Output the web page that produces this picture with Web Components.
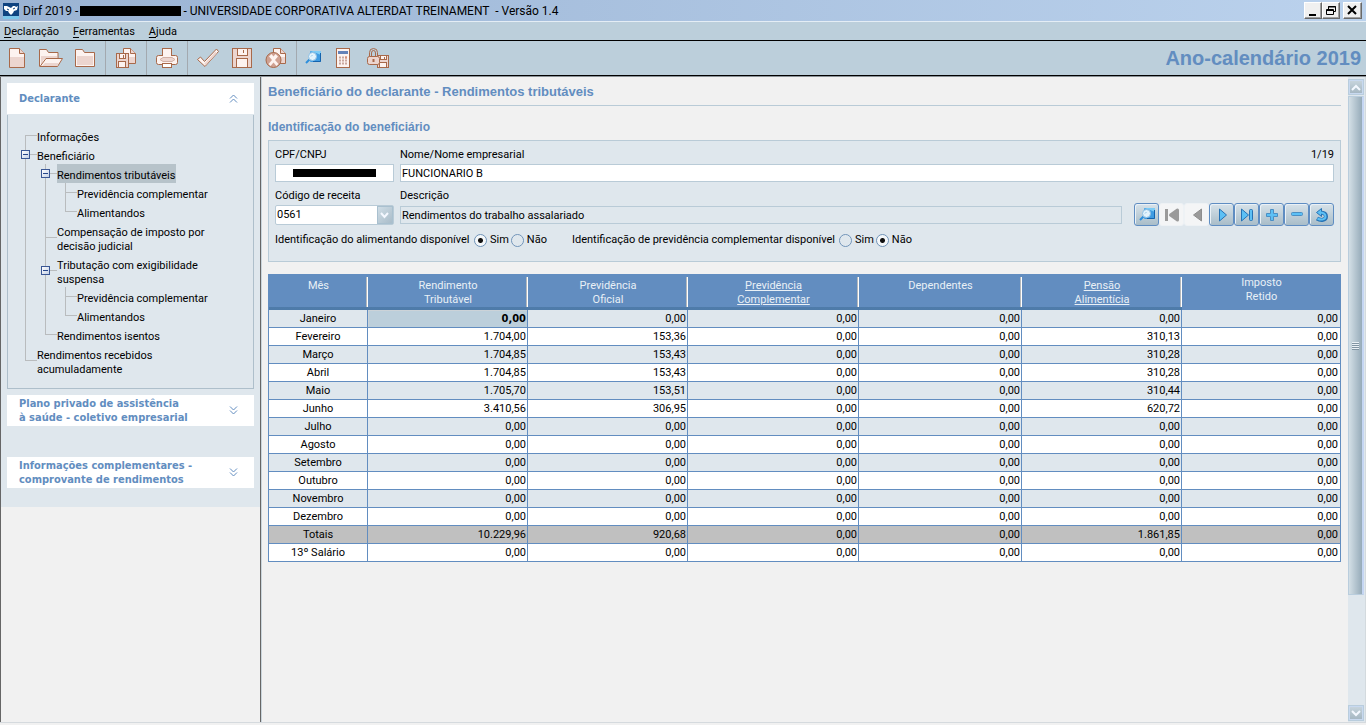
<!DOCTYPE html>
<html lang="pt-BR">
<head>
<meta charset="utf-8">
<title>Dirf 2019</title>
<style>
  html, body { height: 100%; margin: 0; }
  body { font: 11px/14px Roboto, "Noto Sans", sans-serif; color: #000; background: #f1f1f1; }
</style>
</head>
<body>
<dirf-app></dirf-app>

<script>
const define = (name, html, init) => {
  const tpl = document.createElement('template');
  tpl.innerHTML = html;
  customElements.define(name, class extends HTMLElement {
    constructor() {
      super();
      this.attachShadow({ mode: 'open' }).append(tpl.content.cloneNode(true));
    }
    connectedCallback() { if (init && !this.ready) { this.ready = true; init.call(this, this.shadowRoot); } }
  });
};

/* ---------- icons ---------- */
const S = '#a8694a', L = '#fdf3f0', P = '#ecd5cf';
const floppy = (x, y, w, h) => `<rect x="${x}.5" y="${y}.5" width="${w}" height="${h}" fill="${P}" stroke="${S}"/>
  <rect x="${x + Math.round(w * .25)}.5" y="${y}.5" width="${Math.round(w * .5)}" height="${Math.round(h * .35)}" fill="${L}" stroke="${S}"/>
  <path d="M${x + Math.round(w * .6)}.5 ${y + 2}v${Math.round(h * .18)}" stroke="${S}"/>
  <rect x="${x + Math.round(w * .2)}.5" y="${y + Math.round(h * .55)}.5" width="${Math.round(w * .6)}" height="${h - Math.round(h * .55)}" fill="${L}" stroke="${S}"/>`;
const doc = (x, y, w, h) => `<path d="M${x}.5 ${y}.5h${w - 5}l5 5v${h - 5}h-${w}z" fill="${L}" stroke="${S}"/>
  <path d="M${x + 1} ${y + 9}h${w - 1}v${h - 9}h-${w - 1}z" fill="${P}"/><path d="M${x + w - 5}.5 ${y}.5v5h5" fill="${P}" stroke="${S}"/>`;
const lens = `<rect x="9" y="5" width="11" height="11" rx="1" fill="#3f9be2"/><path d="M9 5h11v4l-5-2z" fill="#7ccbf5"/><path d="M19.500 7v8.500H12" stroke="#1463ad" fill="none"/>
  <path d="M8.500 13.500 5 17" stroke="#2d8fdc" stroke-width="2"/><circle cx="11.500" cy="10.500" r="4" fill="#e3f3fc" stroke="#8fc0e4"/><path d="M10 10.500l1.500-1.500" stroke="#8fc4ea"/>`;
const ICONS = {
  novo: doc(4, 2, 15, 19),
  abrir: `<path d="M.5 20.500v-17h7l2 3h9.500v6" fill="${L}" stroke="${S}"/><path d="M2 10h16v3H5l-3 7z" fill="${P}"/><path d="M1 20.500l6-8h16.500l-5 8z" fill="${L}" stroke="${S}"/><path d="M6 17h14l-2 3H3z" fill="${P}"/>`,
  pasta: `<path d="M2.500 20.500v-17h7l2 3h10v14z" fill="${L}" stroke="${S}"/><path d="M4 10h16v9H4z" fill="${P}"/>`,
  copia: doc(9, 2, 12, 15) + floppy(2, 7, 12, 14),
  imprimir: `<rect x="7.500" y="2.500" width="9" height="9" fill="${L}" stroke="${S}"/><rect x="1.500" y="9.500" width="21" height="9" rx="2" fill="${L}" stroke="${S}"/><rect x="8" y="3" width="8" height="8" fill="${L}"/><path d="M5 13.500l3-2h9l3 2-3 2H8z" fill="${P}" stroke="#d3b1a6"/><rect x="7.500" y="17.500" width="9" height="4" fill="#fff" stroke="${S}"/>`,
  verificar: `<path d="M1.500 13.500l3-2.500 4 4.500L20.500 3l2 2.500L9 20.500z" fill="${L}" stroke="${S}"/><path d="M9 18.500l11-12" stroke="${P}" stroke-width="2"/>`,
  gravar: floppy(2, 2, 19, 19),
  cancelar: doc(9, 2, 12, 15) + `<circle cx="9.500" cy="14" r="7.500" fill="#cfa192" stroke="${S}"/><path d="M4.500 18l3.500-4-3-3.500L7.500 8l2 2.500L11.500 8 14 10.500 11 14l3.500 4-2 2-3-3.500-3 3.500z" fill="${L}"/>`,
  procurar: lens,
  calcular: `<rect x="5.500" y="2.500" width="13" height="19" fill="${L}" stroke="${S}"/><rect x="7" y="5" width="10" height="3" fill="#6482b8"/><path d="M8 11.500h8M8 14.500h8M8 17.500h8" stroke="#c9a79e" stroke-width="2" stroke-dasharray="2 1"/><path d="M14 11.500h2" stroke="#d98e77" stroke-width="2"/>`,
  bloquear: floppy(12, 9, 11, 12) + `<path d="M4.500 11V6.500q0-4 4-4t4 4V11" fill="none" stroke="${S}"/><path d="M6.500 11V7q0-2.500 2-2.500t2 2.500v4" fill="none" stroke="${S}"/><rect x="2.500" y="10.500" width="12" height="8" rx="2" fill="${P}" stroke="${S}"/><path d="M8.500 13v3" stroke="${S}" stroke-width="2"/>`,
  n_procurar: lens,
  n_primeiro: `<path d="M6.500 6v12M17.500 7v10l-7-5z" fill="#9a9a9a" stroke="#9a9a9a" stroke-width="3" stroke-linejoin="round"/>`,
  n_anterior: `<path d="M16.500 6v12l-8-6z" fill="#9a9a9a" stroke="#8e8e8e" stroke-linejoin="round"/>`,
  n_proximo: `<path d="M9.500 6v12l7-6z" fill="#5cc0f5" stroke="#2673b5" stroke-linejoin="round"/>`,
  n_ultimo: `<path d="M6.500 6v12l7-6z" fill="#5cc0f5" stroke="#2673b5" stroke-linejoin="round"/><rect x="14.500" y="6.500" width="3" height="11" rx="1" fill="#5cc0f5" stroke="#2673b5"/>`,
  n_incluir: `<path d="M10.500 6.500h3v4h4v3h-4v4h-3v-4h-4v-3h4z" fill="#5cc0f5" stroke="#4a8fc4" stroke-linejoin="round"/>`,
  n_excluir: `<rect x="6.500" y="9.500" width="11" height="3" rx="1" fill="#5cc0f5" stroke="#4a8fc4"/>`,
  n_desfazer: `<path d="M7 15.500c4 2.500 9 1.500 9-2s-3-4-6-4" fill="none" stroke="#2673b5" stroke-width="4"/><path d="M6.500 9.500l5-4v8z" fill="#5cc0f5" stroke="#2673b5"/><path d="M7.500 15.500c4 2 8 1 8-2s-3-4-6-4" fill="none" stroke="#5cc0f5" stroke-width="2"/>`
};
const svg = n => `<svg width="24" height="24" viewBox="0 0 24 24" fill="none" aria-hidden="true">${ICONS[n]}</svg>`;

/* ---------- title bar ---------- */
define('title-bar', `
<style>
  :host { display: flex; align-items: center; height: 21px; padding: 0 4px 0 3px; background: linear-gradient(90deg, #9ab3d3, #bbd2ed); border-bottom: 1px solid #e4edf5; font-size: 12px; }
  .logo { margin-right: 4px; }
  .caption { flex: 1; display: flex; align-items: center; white-space: pre; }
  .hidden { width: 101px; height: 10px; background: #000; margin: 0 2px; }
  .buttons { display: flex; }
  button { width: 18px; height: 17px; padding: 0; background: #f0f0f0; border: 1px solid; border-color: #fff #696969 #696969 #fff; box-shadow: inset -1px -1px #a0a0a0; }
  button:last-child { margin-left: 3px; width: 19px; }
  svg { display: block; }
</style>
<svg class="logo" width="16" height="16" viewBox="0 0 16 16"><rect width="16" height="13" fill="#0f4380"/><rect y="13" width="16" height="3" fill="#7cc6ea"/><path d="M1 3l3 0 2 1 2 1 2-2 2 0 1 1 2-1-1 4-3 1-1 2-2 2-2-2-1-2-2 0-2-2z" fill="#fff"/><path d="M4 6l2 1M10 6l2-1" stroke="#0f4380"/></svg>
<div class="caption"><span>Dirf 2019 -</span><span class="hidden"></span><span>- UNIVERSIDADE CORPORATIVA ALTERDAT TREINAMENT  - Versão 1.4</span></div>
<div class="buttons">
  <button aria-label="Minimizar"><svg width="16" height="15" viewBox="0 0 16 15"><path d="M4 11h7v2H4z"/></svg></button>
  <button aria-label="Restaurar"><svg width="16" height="15" viewBox="0 0 16 15" fill="none" stroke="#000"><path d="M5.500 6V3.500h7v5H11M5 4h8M3.500 6.500h7v5h-7zM3 7.500h8"/></svg></button>
  <button aria-label="Fechar"><svg width="17" height="15" viewBox="0 0 17 15" stroke="#000" stroke-width="2"><path d="M4 3l8 8M12 3l-8 8"/></svg></button>
</div>`);

/* ---------- menu ---------- */
define('menu-bar', `
<style>
  :host { display: flex; gap: 14px; height: 18px; padding: 0 4px; background: #bccfdb; border-bottom: 1px solid #000; }
  button { padding: 2px 0 0; border: 0; background: none; font: inherit; color: inherit; line-height: 16px; }
  u { text-underline-offset: 2px; }
</style>
<button><u>D</u>eclaração</button><button><u>F</u>erramentas</button><button><u>A</u>juda</button>`);

/* ---------- tool bar ---------- */
define('tool-button', `
<style>
  :host { display: block; width: 34px; }
  :host([narrow]) { width: 26px; }
  button { display: flex; width: 100%; height: 100%; padding: 0; border: 0; background: none; align-items: center; justify-content: center; }
  svg { flex: none; }
</style><button></button>`, function (r) {
  const b = r.querySelector('button');
  b.innerHTML = svg(this.getAttribute('icon'));
  b.setAttribute('aria-label', this.getAttribute('icon'));
});
define('tool-bar', `
<style>
  :host { display: flex; height: 34px; background: #bccfdb; border-bottom: 1px solid #000; }
  i { width: 1px; background: #a3a9af; margin: 0 3px; }
  strong { margin-left: auto; padding-right: 5px; align-self: center; font: bold 20px/24px "Liberation Sans", Arial, sans-serif; color: #628dc0; }
</style>
<tool-button icon="novo"></tool-button><tool-button icon="abrir"></tool-button><tool-button icon="pasta"></tool-button><i></i>
<tool-button icon="copia"></tool-button><i></i><tool-button icon="imprimir"></tool-button><i></i>
<tool-button icon="verificar"></tool-button><tool-button icon="gravar"></tool-button><tool-button icon="cancelar"></tool-button><i></i>
<tool-button icon="procurar" narrow></tool-button><tool-button icon="calcular"></tool-button><tool-button icon="bloquear"></tool-button>
<strong>Ano-calendário 2019</strong>`);

/* ---------- side sections ---------- */
define('side-section', `
<style>
  :host { display: block; }
  button { display: flex; align-items: center; justify-content: space-between; width: 100%; height: 31px; padding: 0 16px 0 12px; border: 0; background: #fff; color: #628dc0; text-align: left; font: bold 11px/14px "DejaVu Sans Condensed", "DejaVu Sans", sans-serif; white-space: pre; }
  .body { display: none; border: 1px solid #aebfcb; border-top: 0; margin-top: 1px; padding: 11px 0; }
  :host([open]) .body { display: block; }
  :host([open]) svg { transform: rotate(180deg); }
</style>
<button><slot name="title"></slot><svg width="9" height="9" viewBox="0 0 9 9" fill="none" stroke="#628dc0"><path d="M1 .5l3.500 3.500L8 .5M1 4.500L4.500 8 8 4.500"/></svg></button>
<div class="body"><slot></slot></div>`, function (r) {
  r.querySelector('button').setAttribute('aria-expanded', this.hasAttribute('open'));
});

/* ---------- tree ---------- */
define('tree-item', `
<style>
  :host { display: block; background: linear-gradient(#b9bcbe, #b9bcbe) 4px 0 / 1px 100% no-repeat; }
  :host([last]) { background: none; }
  .row { display: flex; align-items: center; padding-left: 4px; min-height: 19px; margin-left: -4px;
    background: linear-gradient(#b9bcbe, #b9bcbe) 8px 50% / 12px 1px no-repeat; }
  :host([last]) .row { background: linear-gradient(#b9bcbe, #b9bcbe) 8px 50% / 12px 1px no-repeat, linear-gradient(#b9bcbe, #b9bcbe) 8px 0 / 1px 50% no-repeat; }
  :host([first]) { background-position: 4px 9px; }
  .box { flex: none; width: 9px; height: 9px; margin-right: 7px; }
  button.box { padding: 0; border: 1px solid #3a5795; background: linear-gradient(#26468a, #26468a) center / 5px 1px no-repeat, linear-gradient(135deg, #fff, #c3d0e6); }
  a { color: inherit; text-decoration: none; white-space: pre; padding: 5px 1px 0 0; }
  :host([selected]) a { background: #b7c3ca; }
  .kids { padding-left: 20px; }
</style>
<div class="row"><span class="box"></span><a href="#"><slot name="label"></slot></a></div>
<div class="kids"><slot></slot></div>`, function (r) {
  if (this.querySelector('tree-item')) {
    const b = document.createElement('button');
    b.className = 'box';
    b.setAttribute('aria-label', 'Recolher');
    r.querySelector('.box').replaceWith(b);
  }
});

define('side-bar', `
<style>
  :host { display: block; width: 259px; flex: none; border-left: 1px solid #666; border-right: 1px solid #666; box-sizing: content-box; }
  .stack { background: #dfe7ed; padding: 6px 6px 19px; }
  side-section:nth-of-type(2) { margin: 6px 0 31px; }
  .tree { padding-left: 13px; }
</style>
<div class="stack">
  <side-section open><span slot="title">Declarante</span>
    <div class="tree">
      <tree-item first><span slot="label">Informações</span></tree-item>
      <tree-item><span slot="label">Beneficiário</span>
        <tree-item selected><span slot="label">Rendimentos tributáveis</span>
          <tree-item><span slot="label">Previdência complementar</span></tree-item>
          <tree-item last><span slot="label">Alimentandos</span></tree-item>
        </tree-item>
        <tree-item><span slot="label">Compensação de imposto por
decisão judicial</span></tree-item>
        <tree-item><span slot="label">Tributação com exigibilidade
suspensa</span>
          <tree-item><span slot="label">Previdência complementar</span></tree-item>
          <tree-item last><span slot="label">Alimentandos</span></tree-item>
        </tree-item>
        <tree-item last><span slot="label">Rendimentos isentos</span></tree-item>
      </tree-item>
      <tree-item last><span slot="label">Rendimentos recebidos
acumuladamente</span></tree-item>
    </div>
  </side-section>
  <side-section><span slot="title">Plano privado de assistência
à saúde - coletivo empresarial</span></side-section>
  <side-section><span slot="title">Informações complementares -
comprovante de rendimentos</span></side-section>
</div>`);

/* ---------- record navigation ---------- */
define('nav-button', `
<style>
  :host { display: block; width: 25px; }
  button { display: flex; align-items: center; justify-content: center; width: 25px; height: 23px; padding: 0; border: 1px solid #5f8dc2; border-radius: 3px; background: linear-gradient(#d7e2e9, #a9bdc9); box-shadow: inset 1px 1px #eaf1f6; }
  button:disabled { border-color: #eef2f5; background: #f4f5f6; box-shadow: none; }
  svg { flex: none; }
</style><button></button>`, function (r) {
  const b = r.querySelector('button');
  b.innerHTML = svg('n_' + this.getAttribute('icon'));
  b.setAttribute('aria-label', this.getAttribute('icon'));
  b.disabled = this.hasAttribute('disabled');
});

/* ---------- identification form ---------- */
define('beneficiary-form', `
<style>
  :host { display: block; border: 1px solid #b9cbd7; background: #dfe7ed; padding: 7px 6px 14px; }
  .grid { display: grid; grid-template-columns: 119px 1fr auto; column-gap: 6px; }
  .grid > * { min-width: 0; }
  label, output { line-height: 14px; white-space: nowrap; }
  output { text-align: right; }
  .field { position: relative; margin: 2px 0 7px; }
  .wide { grid-column: 2 / 4; }
  input[type=text] { display: block; box-sizing: border-box; width: 100%; height: 18px; padding: 0 1px; border: 1px solid #b9cbd7; background: #fff; font: inherit; color: inherit; }
  input[readonly] { background: #dfe7ed; }
  .hidden::after { content: ""; position: absolute; left: 18px; top: 5px; width: 83px; height: 8px; background: #000; }
  .desc { margin: 3px 6px 0 0; }
  .combo { margin: 2px 0 0; }
  select { appearance: none; display: block; width: 100%; height: 20px; padding: 0 1px; border: 1px solid #b9cbd7; border-radius: 2px; background: #fff; font: inherit; color: inherit; }
  .combo::after { content: ""; position: absolute; right: 1px; top: 1px; width: 14px; height: 16px; border: 1px solid #a9c0cf; background: linear-gradient(135deg, #cfdde6, #a9bcc9); pointer-events: none; }
  .combo svg { position: absolute; right: 5px; top: 7px; z-index: 1; pointer-events: none; }
  .nav { display: flex; }
  .radios { display: flex; align-items: center; height: 14px; margin-top: 7px; }
  .first { width: 199px; } .second { width: 267px; }
  .radios label { display: flex; align-items: center; gap: 3px; margin-right: 2px; }
  .radios .gap { margin-right: 25px; }
  input[type=radio] { appearance: none; width: 13px; height: 13px; margin: 0; border: 1px solid #6f93b8; border-radius: 50%; background: radial-gradient(circle, #dfe7ed 60%, #fff); }
  input[type=radio]:checked { background: radial-gradient(circle, #111 0 2px, #f4f7f9 3px); }
</style>
<div class="grid">
  <label for="cpf">CPF/CNPJ</label><label for="nome">Nome/Nome empresarial</label><output>1/19</output>
  <div class="field hidden"><input type="text" id="cpf"></div>
  <div class="field wide"><input type="text" id="nome" value="FUNCIONARIO B"></div>
  <label for="codigo">Código de receita</label><label class="wide" for="descricao">Descrição</label>
  <div class="field combo"><select id="codigo"><option>0561</option></select><svg width="9" height="7" fill="none" stroke="#f4f8ff" stroke-width="2"><path d="M1 1l3.500 4L8 1"/></svg></div>
  <div class="field desc"><input type="text" id="descricao" value="Rendimentos do trabalho assalariado" readonly></div>
  <div class="nav">
    <nav-button icon="procurar"></nav-button><nav-button icon="primeiro" disabled></nav-button><nav-button icon="anterior" disabled></nav-button><nav-button icon="proximo"></nav-button><nav-button icon="ultimo"></nav-button><nav-button icon="incluir"></nav-button><nav-button icon="excluir"></nav-button><nav-button icon="desfazer"></nav-button>
  </div>
</div>
<div class="radios">
  <span class="first" id="l1">Identificação do alimentando disponível</span>
  <label><input type="radio" name="a" aria-describedby="l1" checked>Sim</label><label class="gap"><input type="radio" name="a" aria-describedby="l1">Não</label>
  <span class="second" id="l2">Identificação de previdência complementar disponível</span>
  <label><input type="radio" name="p" aria-describedby="l2">Sim</label><label><input type="radio" name="p" aria-describedby="l2" checked>Não</label>
</div>`);

/* ---------- income table ---------- */
const MONTHS = [
  ['Janeiro'], ['Fevereiro', '1.704,00', '153,36', '310,13'], ['Março', '1.704,85', '153,43', '310,28'],
  ['Abril', '1.704,85', '153,43', '310,28'], ['Maio', '1.705,70', '153,51', '310,44'], ['Junho', '3.410,56', '306,95', '620,72'],
  ['Julho'], ['Agosto'], ['Setembro'], ['Outubro'], ['Novembro'], ['Dezembro'],
  ['Totais', '10.229,96', '920,68', '1.861,85'], ['13º Salário']
];
define('income-table', `
<style>
  :host { display: block; }
  table { width: 100%; table-layout: fixed; border-collapse: separate; border-spacing: 0; border-left: 1px solid #628dc0; }
  th, td { padding: 0; font-weight: normal; }
  thead th { height: 36px; box-sizing: border-box; padding-top: 5px; vertical-align: top; color: #e9f0f6; white-space: pre-line;
    background: linear-gradient(90deg, #b5b9bc 50%, #fff 50%) 100% 3px / 2px 30px no-repeat, linear-gradient(#628dc0, #628dc0) 0 0 / 100% 33px no-repeat, linear-gradient(#5581b2, #4e7ba9); }
  thead th:last-child { background: #628dc0; padding-top: 2px; }
  thead a { color: inherit; }
  tbody td, tbody th { box-sizing: border-box; height: 18px; line-height: 17px; border-right: 1px solid #628dc0; border-bottom: 1px solid #628dc0; background: #fff; }
  tbody td { text-align: right; padding-right: 1px; }
  tbody td:last-child { padding-right: 2px; }
  tbody tr:nth-child(odd) > * { background: #dfe7ed; }
  tbody tr:nth-child(13) > * { background: #c0c0c0; }
  tbody tr:first-child td:nth-child(2) { background: #bccfdb; font: bold 11px/17px "DejaVu Sans Condensed", "DejaVu Sans", sans-serif; box-shadow: inset 1px 1px #ccd3d8; }
</style>
<table>
  <colgroup><col style="width:99px"><col style="width:160px"><col style="width:160px"><col style="width:171px"><col style="width:163px"><col style="width:160px"><col style="width:159px"></colgroup>
  <thead><tr><th>Mês</th><th>Rendimento
Tributável</th><th>Previdência
Oficial</th><th><a href="#">Previdência
Complementar</a></th><th>Dependentes</th><th><a href="#">Pensão
Alimentícia</a></th><th>Imposto
Retido</th></tr></thead>
  <tbody></tbody>
</table>`, function (r) {
  const z = '0,00';
  r.querySelector('tbody').innerHTML = MONTHS.map(([m, a = z, b = z, c = z]) =>
    `<tr><th scope="row">${m}</th>${[a, b, z, z, c, z].map(v => `<td>${v}</td>`).join('')}</tr>`).join('');
});

/* ---------- scroll bar ---------- */
define('side-scroll', `
<style>
  :host { display: flex; flex-direction: column; box-sizing: border-box; width: 18px; background: #dfe7ed; border-right: 1px solid #d3dade; padding: 2px 1px 1px 0; }
  button { display: flex; align-items: center; justify-content: center; height: 16px; padding: 0; border: 1px solid #b9cddd; background: linear-gradient(#c9d6de, #a3b5c1); box-shadow: inset 0 0 0 1px #c8d9f0; }
  .track { flex: 1; display: flex; flex-direction: column; margin: 1px 0 0; }
  .thumb { height: 82%; display: flex; align-items: center; justify-content: center; box-sizing: border-box; border: 1px solid #b9cddd; border-right: 2px solid #c5d6f3; background: linear-gradient(90deg, #d3dfe6, #96abb9); }
</style>
<button aria-label="Subir"><svg width="10" height="7" fill="none" stroke="#f4f8ff" stroke-width="2"><path d="M1 6l4-4 4 4"/></svg></button>
<div class="track"><div class="thumb"><svg width="7" height="8" stroke="#eaf1f6"><path d="M0 .5h7M0 2.500h7M0 4.500h7M0 6.500h7"/><path d="M0 1.500h7M0 3.500h7M0 5.500h7M0 7.500h7" stroke="#8295a3"/></svg></div></div>
<button aria-label="Descer"><svg width="10" height="7" fill="none" stroke="#f4f8ff" stroke-width="2"><path d="M1 1l4 4 4-4"/></svg></button>`);

define('main-panel', `
<style>
  :host { display: flex; flex: 1; min-width: 0; border-left: 1px solid #c9d4db; }
  main { flex: 1; min-width: 0; padding: 8px 7px 0 6px; }
  h1, h2 { margin: 0; color: #628dc0; font-family: "Liberation Sans", Arial, sans-serif; }
  h1 { font-size: 13px; line-height: 14px; padding-bottom: 6px; border-bottom: 1px solid #b9cbd7; }
  h2 { font-size: 12px; line-height: 14px; margin: 14px 0 6px; }
  income-table { margin-top: 12px; }
</style>
<main>
  <h1>Beneficiário do declarante - Rendimentos tributáveis</h1>
  <h2>Identificação do beneficiário</h2>
  <beneficiary-form></beneficiary-form>
  <income-table></income-table>
</main>
<side-scroll></side-scroll>`);

define('dirf-app', `
<style>
  :host { display: flex; flex-direction: column; min-height: 100vh; background: #f1f1f1; }
  .work { flex: 1; display: flex; border-top: 1px solid #8b9297; border-bottom: 1px solid #d5dade; margin-bottom: 2px; }
</style>
<title-bar></title-bar><menu-bar></menu-bar><tool-bar></tool-bar>
<div class="work"><side-bar></side-bar><main-panel></main-panel></div>`);
</script>
</body>
</html>
